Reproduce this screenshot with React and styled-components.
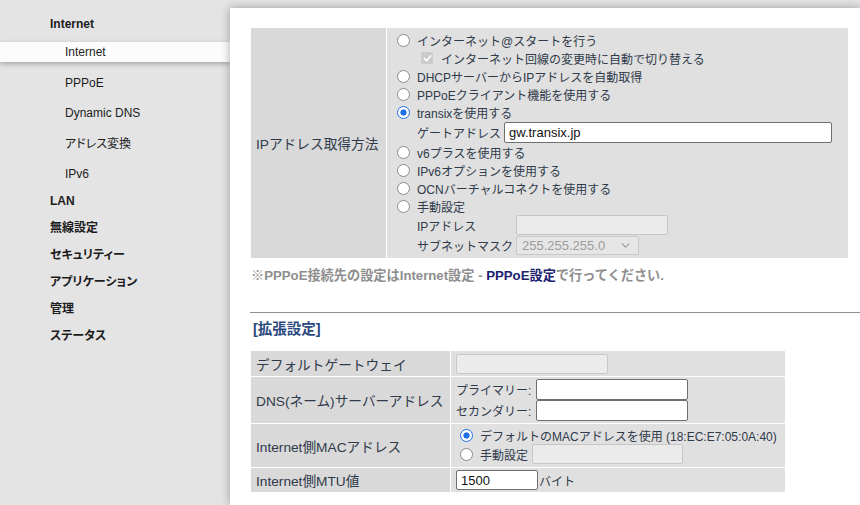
import React from 'react'
import styled, { createGlobalStyle } from 'styled-components'
import { ChevronDown } from 'lucide-react'

const GlobalStyle = createGlobalStyle`
  *, *::before, *::after { box-sizing: border-box; }
  html, body { margin: 0; padding: 0; }
  body {
    background: #e4e4e4;
    font-family: "Liberation Sans", "Noto Sans CJK JP", sans-serif;
    font-size: 12px;
    color: #2f3a4a;
    width: 860px;
    height: 505px;
    overflow: hidden;
  }
`

const Page = styled.div`
  display: flex;
  height: 505px;
`

const Sidebar = styled.nav`
  width: 230px;
  flex-shrink: 0;
  display: flex;
  flex-direction: column;
  gap: 7px;
  padding-top: 14px;
  font-feature-settings: "palt";
  color: #1c1c1c;
`

const NavItem = styled.div`
  font-weight: bold;
  line-height: 20px;
  padding-left: 50px;
`

const SubList = styled.div`
  display: flex;
  flex-direction: column;
  gap: 10.5px;
  margin-top: 1px;
`

const SubItem = styled.div`
  line-height: 20px;
  padding-left: 65px;
  background: ${({ $active }) => ($active ? '#fcfcfc' : 'transparent')};
  box-shadow: ${({ $active }) => ($active ? '0 2px 5px rgba(0,0,0,0.28)' : 'none')};
`

const Main = styled.main`
  flex: 1;
  margin-top: 8px;
  background: #fff;
  box-shadow: 0 0 9px rgba(0, 0, 0, 0.32);
  padding: 20px 0 0 21px;
  position: relative;
  z-index: 1;
`

const FormTable = styled.table`
  border-collapse: separate;
  border-spacing: 0;
  width: ${({ $width }) => $width}px;
`

const LabelCell = styled.th`
  width: ${({ $width }) => $width}px;
  height: ${({ $height }) => ($height ? `${$height}px` : 'auto')};
  background: #d9d9d9;
  border-right: 1px solid #fff;
  border-bottom: 1px solid #fff;
  padding: 0 5px;
  text-align: left;
  font-weight: normal;
  font-size: 13.7px;
  white-space: nowrap;
`

const ValueCell = styled.td`
  background: #e0e0e0;
  border-bottom: 1px solid #fff;
  padding: ${({ $pad }) => $pad || '0 5px'};
  vertical-align: middle;
`

const Options = styled.div`
  display: flex;
  flex-direction: column;
`

const OptionRow = styled.label`
  display: flex;
  align-items: center;
  height: ${({ $h }) => $h || 18}px;
  padding-left: ${({ $indent }) => $indent || 0}px;
  white-space: nowrap;
`

const Radio = styled.input.attrs({ type: 'radio' })`
  appearance: none;
  width: 13px;
  height: 13px;
  margin: 0 7px 0 0;
  flex-shrink: 0;
  border: 1px solid #8a8a8a;
  border-radius: 50%;
  background: #fff;
  &:checked {
    border: 1.5px solid #1f6feb;
    background: radial-gradient(circle, #1f6feb 0 2.8px, #fff 3.4px);
  }
`

const CheckBox = styled.span`
  display: inline-flex;
  align-items: center;
  justify-content: center;
  width: 12px;
  height: 12px;
  margin-right: 8px;
  border-radius: 2px;
  background: #cbcbcb;
`

const SubLabel = styled.span`
  display: inline-block;
  width: ${({ $width }) => $width}px;
  flex-shrink: 0;
`

const TextInput = styled.input`
  width: ${({ $width }) => $width}px;
  height: ${({ $height }) => $height || 21}px;
  border: 1px solid ${({ disabled }) => (disabled ? '#c6c6c6' : '#6f6f6f')};
  border-radius: 2px;
  background: ${({ disabled }) => (disabled ? '#ebebeb' : '#fff')};
  padding: 0 4px;
  margin: 0;
  font-family: "Liberation Sans", "Noto Sans CJK JP", sans-serif;
  font-size: 13px;
  color: #111;
  flex-shrink: 0;
`

const SelectBox = styled.div`
  display: flex;
  align-items: center;
  justify-content: space-between;
  width: 123px;
  height: 19px;
  padding: 0 6px 0 5px;
  border: 1px solid #c8c8c8;
  border-radius: 2px;
  background: #e6e6e6;
  color: #9c9c9c;
  font-size: 13px;
`

const Note = styled.p`
  margin: 8px 0 0;
  line-height: 18px;
  font-size: 13.2px;
  font-weight: bold;
  color: #8e8e8e;
`

const NoteLink = styled.span`
  color: #1d2270;
`

const Rule = styled.hr`
  margin: 27px 0 0 -1px;
  border: 0;
  border-top: 1px solid #8f8f8f;
`

const SectionTitle = styled.h3`
  margin: 6px 0 0 2px;
  line-height: 20px;
  font-size: 14.5px;
  font-weight: bold;
  color: #2b4a7e;
`

const Spacer = styled.div`
  height: 12px;
`

const Inline = styled.div`
  display: flex;
  align-items: center;
  height: ${({ $h }) => ($h ? `${$h}px` : 'auto')};
  white-space: nowrap;
`

const Unit = styled.span`
  margin-left: 1px;
`

const subMenu = ['Internet', 'PPPoE', 'Dynamic DNS', 'アドレス変換', 'IPv6']
const topMenu = ['LAN', '無線設定', 'セキュリティー', 'アプリケーション', '管理', 'ステータス']

const App = () => {
  return (
    <Page>
      <GlobalStyle />
      <Sidebar>
        <NavItem>Internet</NavItem>
        <SubList>
          {subMenu.map((item, i) => (
            <SubItem key={item} $active={i === 0}>{item}</SubItem>
          ))}
        </SubList>
        {topMenu.map(item => (
          <NavItem key={item}>{item}</NavItem>
        ))}
      </Sidebar>

      <Main>
        <FormTable $width={597}>
          <tbody>
            <tr>
              <LabelCell $width={136} $height={230}>IPアドレス取得方法</LabelCell>
              <ValueCell $pad="3px 0 3px 10px">
                <Options>
                  <OptionRow><Radio name="ip" />インターネット@スタートを行う</OptionRow>
                  <OptionRow $indent={24}>
                    <CheckBox>
                      <svg width="9" height="9" viewBox="0 0 10 10">
                        <path d="M1.5 5.2 L4 7.6 L8.6 2.2" fill="none" stroke="#fff" strokeWidth="1.8" strokeLinecap="round" strokeLinejoin="round" />
                      </svg>
                    </CheckBox>
                    インターネット回線の変更時に自動で切り替える
                  </OptionRow>
                  <OptionRow><Radio name="ip" />DHCPサーバーからIPアドレスを自動取得</OptionRow>
                  <OptionRow><Radio name="ip" />PPPoEクライアント機能を使用する</OptionRow>
                  <OptionRow><Radio name="ip" defaultChecked />transixを使用する</OptionRow>
                  <OptionRow $h={22} $indent={20}>
                    <SubLabel $width={87}>ゲートアドレス</SubLabel>
                    <TextInput $width={328} defaultValue="gw.transix.jp" />
                  </OptionRow>
                  <OptionRow><Radio name="ip" />v6プラスを使用する</OptionRow>
                  <OptionRow><Radio name="ip" />IPv6オプションを使用する</OptionRow>
                  <OptionRow><Radio name="ip" />OCNバーチャルコネクトを使用する</OptionRow>
                  <OptionRow><Radio name="ip" />手動設定</OptionRow>
                  <OptionRow $h={20} $indent={20}>
                    <SubLabel $width={99}>IPアドレス</SubLabel>
                    <TextInput $width={152} $height={20} disabled />
                  </OptionRow>
                  <OptionRow $h={20} $indent={20}>
                    <SubLabel $width={99}>サブネットマスク</SubLabel>
                    <SelectBox>
                      255.255.255.0
                      <ChevronDown size={13} strokeWidth={2.4} color="#a0a0a0" />
                    </SelectBox>
                  </OptionRow>
                </Options>
              </ValueCell>
            </tr>
          </tbody>
        </FormTable>

        <Note>
          ※PPPoE接続先の設定はInternet設定 - <NoteLink>PPPoE設定</NoteLink>で行ってください.
        </Note>

        <Rule />
        <SectionTitle>[拡張設定]</SectionTitle>
        <Spacer />

        <FormTable $width={534}>
          <tbody>
            <tr>
              <LabelCell $width={200} $height={26}>デフォルトゲートウェイ</LabelCell>
              <ValueCell>
                <TextInput $width={152} $height={20} disabled />
              </ValueCell>
            </tr>
            <tr>
              <LabelCell $width={200} $height={47}>DNS(ネーム)サーバーアドレス</LabelCell>
              <ValueCell>
                <Inline>
                  <SubLabel $width={80}>プライマリー:</SubLabel>
                  <TextInput $width={152} />
                </Inline>
                <Inline>
                  <SubLabel $width={80}>セカンダリー:</SubLabel>
                  <TextInput $width={152} />
                </Inline>
              </ValueCell>
            </tr>
            <tr>
              <LabelCell $width={200} $height={44}>Internet側MACアドレス</LabelCell>
              <ValueCell $pad="0 0 0 9px">
                <Options>
                  <OptionRow $h={17}><Radio name="mac" defaultChecked />デフォルトのMACアドレスを使用 (18:EC:E7:05:0A:40)</OptionRow>
                  <OptionRow $h={20}>
                    <Radio name="mac" />
                    <SubLabel $width={52}>手動設定</SubLabel>
                    <TextInput $width={151} $height={20} disabled />
                  </OptionRow>
                </Options>
              </ValueCell>
            </tr>
            <tr>
              <LabelCell $width={200} $height={25}>Internet側MTU値</LabelCell>
              <ValueCell>
                <Inline>
                  <TextInput $width={82} $height={20} defaultValue="1500" />
                  <Unit>バイト</Unit>
                </Inline>
              </ValueCell>
            </tr>
          </tbody>
        </FormTable>
      </Main>
    </Page>
  )
}

export default App
